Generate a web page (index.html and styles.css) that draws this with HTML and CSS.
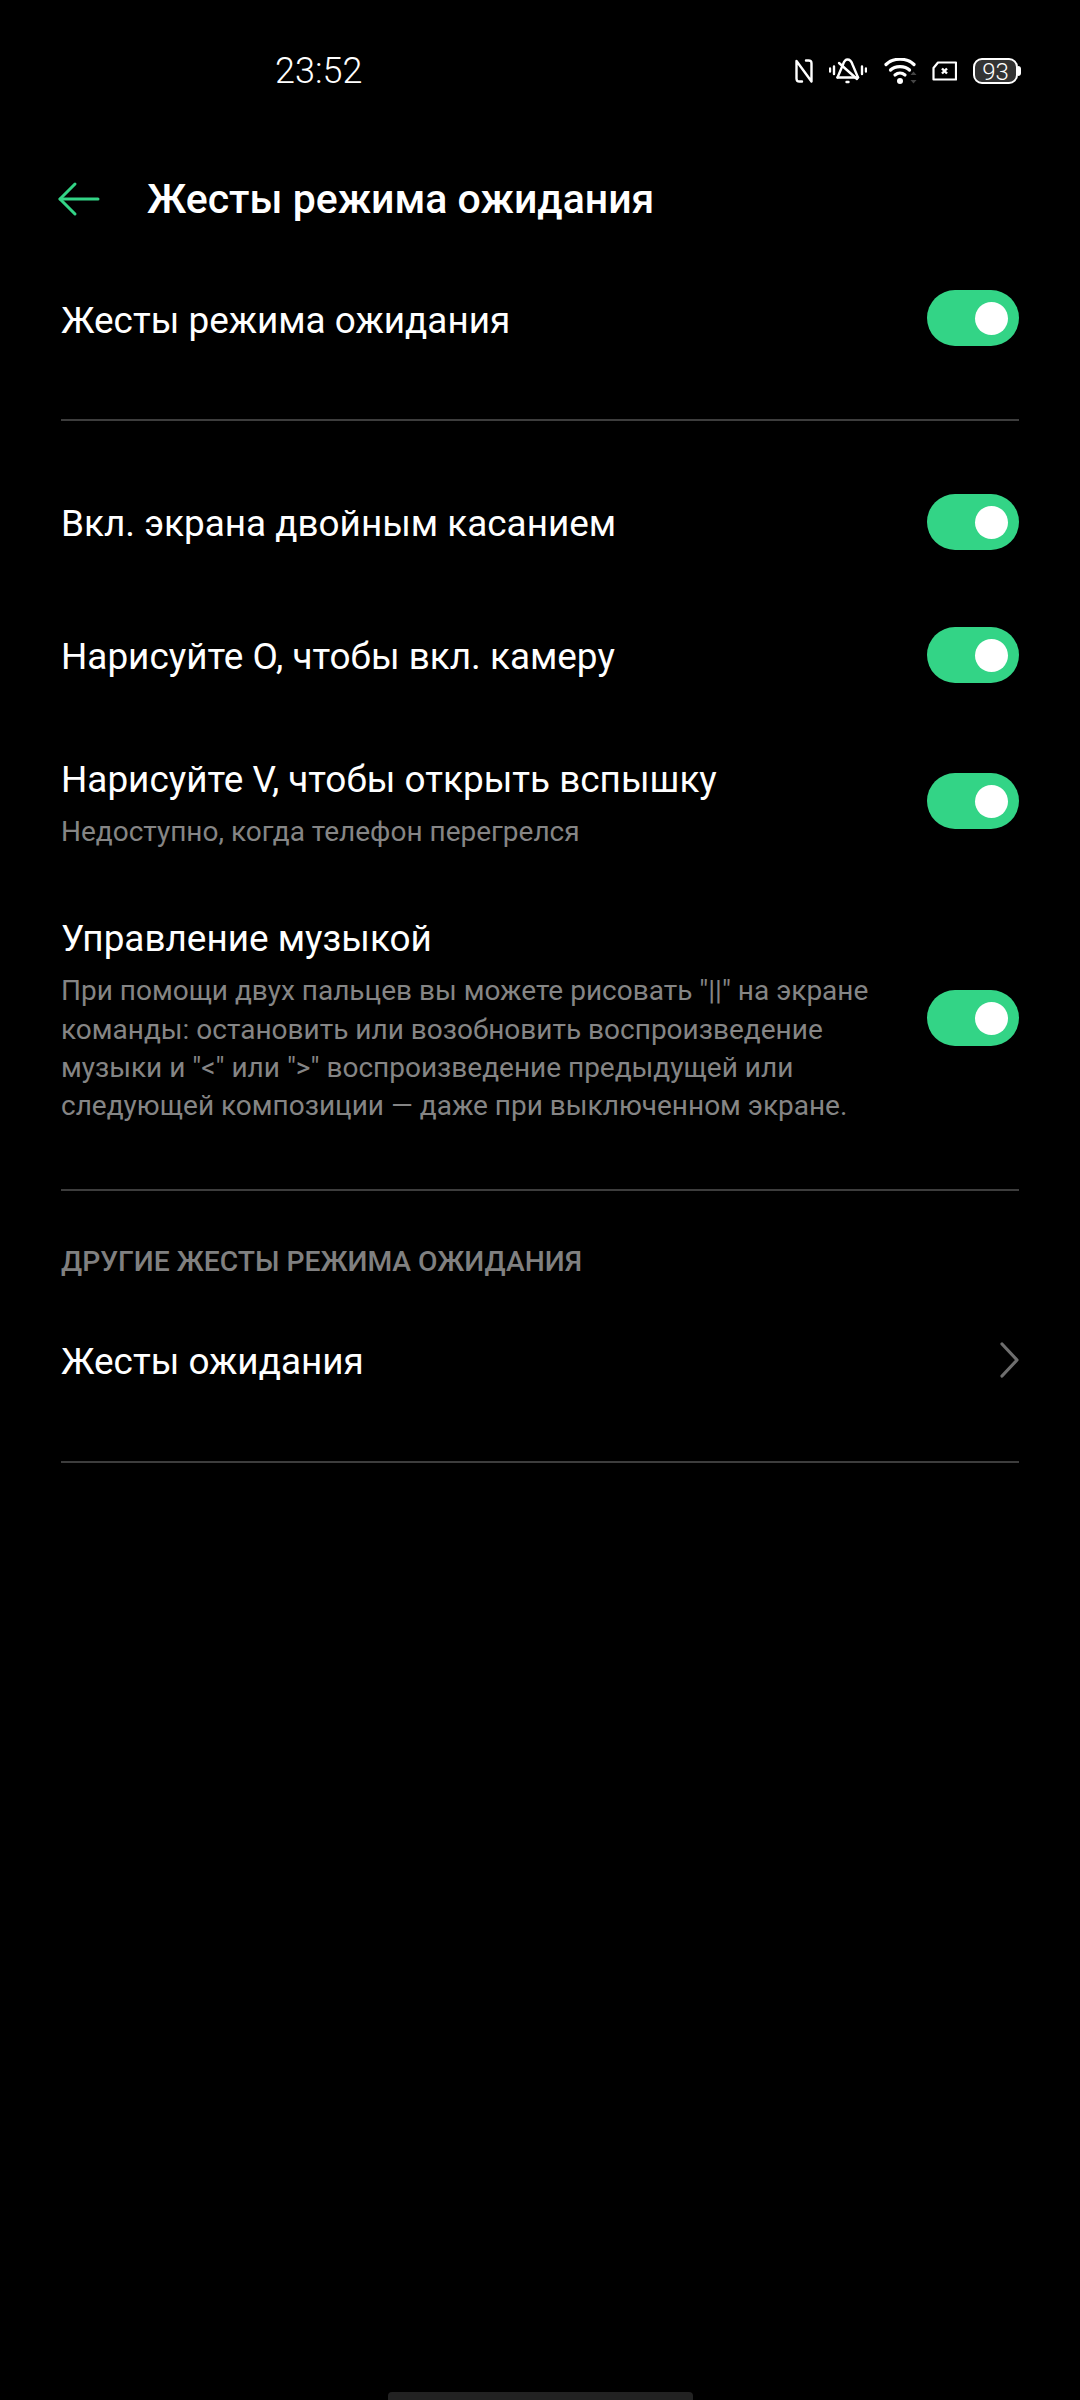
FILE: index.html
```html
<!DOCTYPE html>
<html lang="ru">
<head>
    <meta charset="UTF-8">
    <meta name="viewport" content="width=device-width, initial-scale=1.0">
    <title>Жесты режима ожидания</title>
    <link rel="stylesheet" href="styles.css">
</head>
<body>
    <div class="status-bar">
        <span class="clock">23:52</span>
        <div class="status-icons">
            <svg class="nfc-icon" width="18" height="24" viewBox="0 0 18 24" fill="none" stroke="#fff" stroke-width="2.4" stroke-linecap="round" stroke-linejoin="round">
                <path d="M7 22.500H4.500Q1.500 22.500 1.500 19.500V2L16.500 22.500V4.500Q16.500 1.500 13.500 1.500H11"/>
            </svg>
            <svg class="bell-icon" width="38" height="26" viewBox="0 0 38 26" fill="none" stroke="#fff" stroke-width="2.4" stroke-linecap="round" stroke-linejoin="round">
                <path d="M1 10.500v3M5 8.500v7.500M33 8.500v7.500M37 10.500v3"/>
                <path d="M8.500 19.500h20.500"/>
                <path d="M8.500 19.500L14 6.500C15 3.500 16.500 1.500 18.500 1.500S22.500 3.500 23.500 6.500L29 19.500"/>
                <path d="M10 5L28 21"/>
                <path d="M17.500 24h2"/>
            </svg>
            <svg class="wifi-icon" width="33" height="27" viewBox="0 0 33 27" fill="none" stroke="#fff" stroke-width="3.2" stroke-linecap="round">
                <path d="M2 6.500C9 -.5 23 -.5 30 6.500"/>
                <path d="M6.500 12C11 7.500 21 7.500 25.500 12"/>
                <path d="M11 17C14 14.500 18 14.500 21 17"/>
                <circle cx="16" cy="23" r="3" fill="#fff" stroke="none"/>
                <path d="M29.500 13.500l-3 3.500h6zM29.500 25.500l-3-3.500h6z" fill="#444" stroke="none"/>
            </svg>
            <svg class="sim-icon" width="25" height="20" viewBox="0 0 25 20" fill="none" stroke="#fff" stroke-width="2.2" stroke-linejoin="round">
                <path d="M6 1.500H24V18.500H1.500V7z"/>
                <path d="M10 7.500l5 5M15 7.500l-5 5" stroke-width="2.4"/>
            </svg>
            <div class="battery">
                <div class="battery-body">93</div>
                <div class="battery-nub"></div>
            </div>
        </div>
    </div>

    <div class="title-bar">
        <svg class="back-icon" width="43" height="36" viewBox="0 0 43 36" fill="none" stroke="#33d486" stroke-width="3" stroke-linecap="round" stroke-linejoin="round">
            <path d="M41 18H3"/>
            <path d="M18 3L3 18l15 15"/>
        </svg>
        <h1 class="page-title">Жесты режима ожидания</h1>
    </div>

    <div class="section section-main">
        <div class="row row-main">
            <div class="row-text"><div class="row-title">Жесты режима ожидания</div></div>
            <div class="switch"></div>
        </div>
    </div>

    <div class="section section-gestures">
        <div class="row row-tap">
            <div class="row-text"><div class="row-title">Вкл. экрана двойным касанием</div></div>
            <div class="switch"></div>
        </div>
        <div class="row row-camera">
            <div class="row-text"><div class="row-title">Нарисуйте O, чтобы вкл. камеру</div></div>
            <div class="switch"></div>
        </div>
        <div class="row row-flash">
            <div class="row-text has-desc">
                <div class="row-title">Нарисуйте V, чтобы открыть вспышку</div>
                <div class="row-desc">Недоступно, когда телефон перегрелся</div>
            </div>
            <div class="switch"></div>
        </div>
        <div class="row row-music">
            <div class="row-text has-desc">
                <div class="row-title">Управление музыкой</div>
                <div class="row-desc">При помощи двух пальцев вы можете рисовать "||" на экране команды: остановить или возобновить воспроизведение музыки и "&lt;" или "&gt;" воспроизведение предыдущей или следующей композиции — даже при выключенном экране.</div>
            </div>
            <div class="switch"></div>
        </div>
    </div>

    <div class="section section-other">
        <div class="section-label">ДРУГИЕ ЖЕСТЫ РЕЖИМА ОЖИДАНИЯ</div>
        <div class="row row-link">
            <div class="row-text"><div class="row-title">Жесты ожидания</div></div>
            <svg class="chevron" width="19" height="36" viewBox="0 0 19 36" fill="none" stroke="#6e6e6e" stroke-width="3.2" stroke-linecap="round" stroke-linejoin="round">
                <path d="M2 2l15 16L2 34"/>
            </svg>
        </div>
    </div>

    <div class="home-bar"></div>
</body>
</html>
```

FILE: styles.css
```css
* {
    box-sizing: border-box;
}
html, body {
    margin: 0;
    padding: 0;
}
body {
    width: 1080px;
    height: 2400px;
    background-color: #000;
    color: #fff;
    font-family: Roboto, "Noto Sans", sans-serif;
    overflow: hidden;
    display: flex;
    flex-direction: column;
}
.status-bar {
    height: 144px;
    padding: 50px 59px 0 275px;
    display: flex;
    justify-content: space-between;
    align-items: flex-start;
}
.clock {
    font-size: 36px;
    line-height: 42px;
    font-weight: 300;
}
.status-icons {
    display: flex;
    align-items: center;
    height: 42px;
}
.nfc-icon {
    margin-right: 16px;
}
.bell-icon {
    margin-right: 17px;
}
.wifi-icon {
    margin-right: 15px;
}
.sim-icon {
    margin-right: 16px;
}
.battery {
    display: flex;
    align-items: center;
}
.battery-body {
    width: 45px;
    height: 26px;
    border: 2.5px solid #fff;
    border-radius: 9px;
    background-color: #333;
    font-size: 24px;
    line-height: 25px;
    font-weight: 300;
    text-align: center;
}
.battery-nub {
    width: 3px;
    height: 10px;
    border-radius: 0 3px 3px 0;
    background-color: #fff;
}
.title-bar {
    height: 110px;
    padding-left: 57px;
    display: flex;
    align-items: center;
}
.back-icon {
    margin-right: 47px;
}
.page-title {
    margin: 0;
    font-size: 41px;
    font-weight: 500;
    line-height: 48px;
}
.section {
    margin: 0 61px;
    border-bottom: 2px solid #3d3d3d;
}
.section-main {
    padding: 8px 0 45px;
}
.section-gestures {
    padding: 34px 0;
}
.section-other {
    padding: 53px 0 21px;
}
.row {
    display: flex;
    align-items: center;
    justify-content: space-between;
}
.row-main {
    height: 112px;
}
.row-tap {
    height: 134px;
}
.row-camera {
    height: 132px;
}
.row-flash {
    height: 160px;
}
.row-music {
    height: 274px;
}
.row-link {
    height: 160px;
}
.row-text {
    width: 810px;
    padding-top: 4px;
}
.row-text.has-desc, .row-main .row-text {
    padding-top: 5px;
}
.row-title {
    font-size: 36.9px;
    line-height: 48px;
}
.row-desc {
    margin-top: 9px;
    font-size: 28px;
    line-height: 38.4px;
    color: #858585;
}
.switch {
    flex: none;
    position: relative;
    width: 92px;
    height: 56px;
    border-radius: 28px;
    background-color: #33d486;
}
.switch::after {
    content: "";
    position: absolute;
    right: 11px;
    top: 11.5px;
    width: 33px;
    height: 33px;
    border-radius: 50%;
    background-color: #fff;
}
.section-label {
    font-size: 28.25px;
    line-height: 36px;
    font-weight: 500;
    color: #808080;
}
.chevron {
    flex: none;
}
.home-bar {
    flex: none;
    width: 305px;
    height: 8px;
    margin: auto 0 0 388px;
    border-radius: 4px 4px 0 0;
    background-color: #222;
}
```
